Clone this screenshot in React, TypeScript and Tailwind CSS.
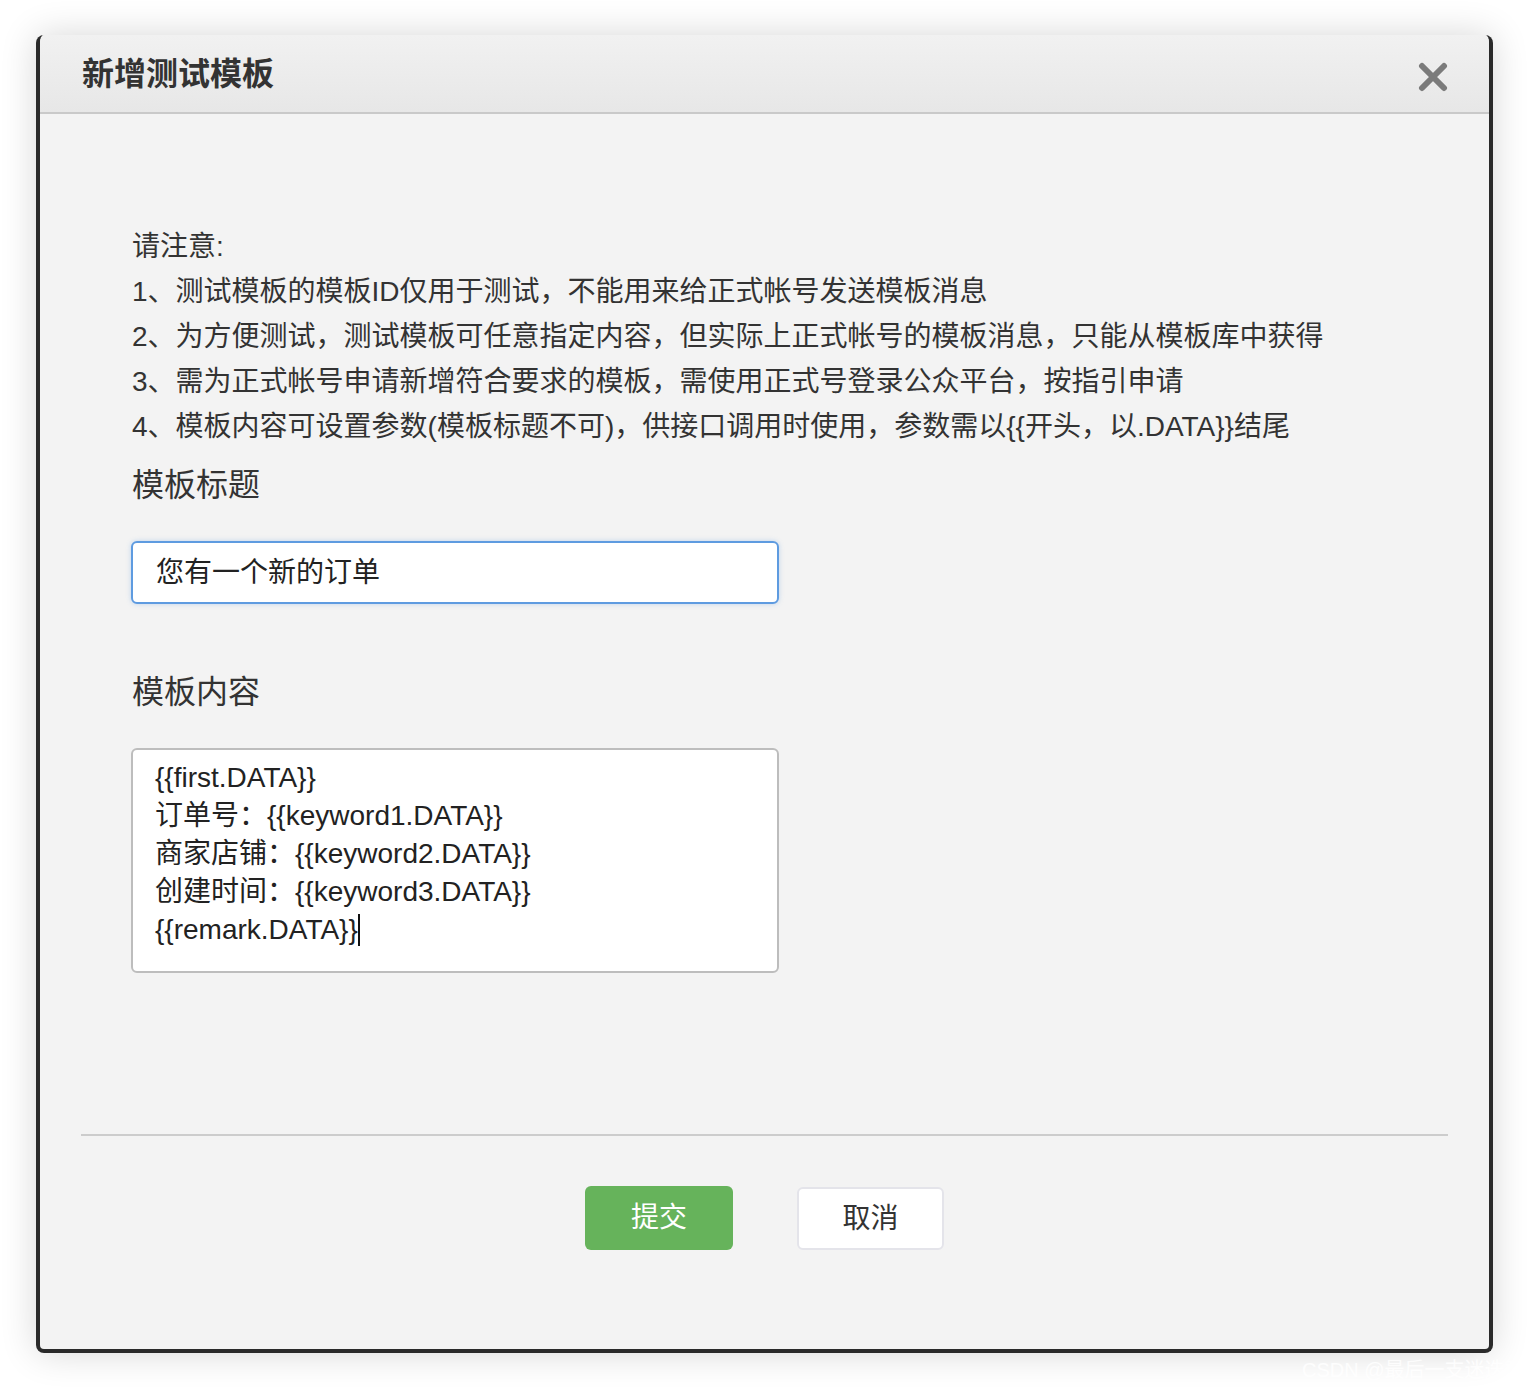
import React from "react";

const FONT = '"Liberation Sans", "Noto Sans CJK SC", sans-serif';

export default function App() {
  return (
    <div
      className="relative w-[1530px] h-[1390px] bg-white pt-[35px] pl-[36px] overflow-hidden"
      style={{ fontFamily: FONT }}
    >
      <div className="w-[1457px] h-[1318px] flex flex-col bg-[#f3f3f3] border-x-[4px] border-b-[4px] border-[#2a2a2a] rounded-[8px] shadow-[0_0_36px_rgba(0,0,0,0.16)] overflow-hidden">
        {/* Header */}
        <div className="h-[79px] shrink-0 flex items-center justify-between pl-[42px] pr-[41px] bg-gradient-to-b from-[#f1f1f1] to-[#e7e7e7] border-b-[2px] border-[#c9c9c9]">
          <div className="text-[32px] font-bold text-[#333] leading-[40px]">新增测试模板</div>
          <svg width="30" height="30" viewBox="0 0 30 30" className="mt-[6px]">
            <path d="M4 4 L26 26 M26 4 L4 26" stroke="#7b7b7b" strokeWidth="6" strokeLinecap="round" />
          </svg>
        </div>

        {/* Body */}
        <div className="pl-[92px] pt-[110px] flex flex-col">
          <div className="text-[28px] leading-[45px] text-[#333]">
            <div>请注意:</div>
            <div>1、测试模板的模板ID仅用于测试，不能用来给正式帐号发送模板消息</div>
            <div>2、为方便测试，测试模板可任意指定内容，但实际上正式帐号的模板消息，只能从模板库中获得</div>
            <div>3、需为正式帐号申请新增符合要求的模板，需使用正式号登录公众平台，按指引申请</div>
            <div>4、模板内容可设置参数(模板标题不可)，供接口调用时使用，参数需以{"{{"}开头，以.DATA{"}}"}结尾</div>
          </div>

          <div className="mt-[14px] text-[32px] leading-[44px] text-[#333]">模板标题</div>
          <div className="mt-[34px] -ml-[1px] w-[648px] h-[63px] bg-white border-[2px] border-[#5e9be0] rounded-[6px] shadow-[0_0_5px_rgba(94,155,224,0.35)] flex items-center pl-[23px] text-[28px] text-[#222]">
            您有一个新的订单
          </div>

          <div className="mt-[66px] text-[32px] leading-[44px] text-[#333]">模板内容</div>
          <div className="mt-[34px] -ml-[1px] w-[648px] h-[225px] bg-white border-[2px] border-[#bdbdbd] rounded-[6px] pl-[22px] pt-[9px] text-[28px] leading-[38px] text-[#222]">
            <div>{"{{first.DATA}}"}</div>
            <div>订单号：{"{{keyword1.DATA}}"}</div>
            <div>商家店铺：{"{{keyword2.DATA}}"}</div>
            <div>创建时间：{"{{keyword3.DATA}}"}</div>
            <div className="flex items-center">
              <span>{"{{remark.DATA}}"}</span>
              <span className="inline-block w-[2px] h-[32px] bg-[#111]" />
            </div>
          </div>
        </div>

        {/* Footer */}
        <div className="mt-[161px] mx-[41px] border-t-[2px] border-[#cccccc] flex justify-center gap-[64px] pt-[50px]">
          <div className="w-[148px] h-[64px] rounded-[6px] bg-[#66b35b] text-white text-[28px] flex items-center justify-center">
            提交
          </div>
          <div className="w-[147px] h-[63px] mt-[1px] rounded-[6px] bg-white border-[2px] border-[#e4e4ea] text-[#333] text-[28px] flex items-center justify-center">
            取消
          </div>
        </div>
      </div>

      <div className="absolute left-[1302px] top-[1356px] text-[20px] leading-[28px] text-[rgba(255,255,255,0.85)] whitespace-nowrap">
        CSDN @最后一支迷迭香
      </div>
    </div>
  );
}
